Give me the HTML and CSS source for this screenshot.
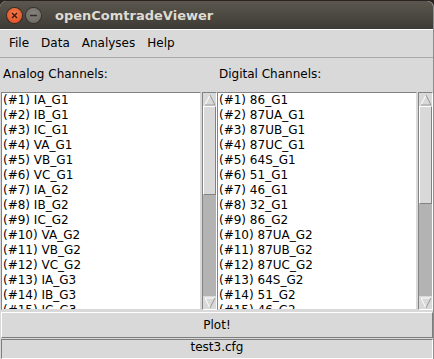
FILE: index.html
```html
<!DOCTYPE html>
<html lang="en">
<head>
  <meta charset="UTF-8">
  <title>openComtradeViewer</title>
  <link rel="stylesheet" href="styles.css">
</head>
<body>
  <div class="window">
    <div class="titlebar">
      <span class="btn close">
        <svg width="15" height="15" viewBox="0 0 15 15"><path d="M5 5 L10 10 M10 5 L5 10" stroke="#3b1a10" stroke-width="1.4"/></svg>
      </span>
      <span class="btn minimize">
        <svg width="15" height="15" viewBox="0 0 15 15"><path d="M4 7.5 H11" stroke="#2e2e2b" stroke-width="1.4"/></svg>
      </span>
      <span class="title">openComtradeViewer</span>
    </div>

    <div class="menubar">
      <span class="menu">File</span>
      <span class="menu">Data</span>
      <span class="menu">Analyses</span>
      <span class="menu">Help</span>
    </div>

    <div class="channels">
      <div class="column">
        <div class="caption">Analog Channels:</div>
        <div class="listframe">
          <ul class="listbox" id="analog"></ul>
          <div class="scrollbar">
            <div class="arrow up"><svg width="12" height="12" viewBox="0 0 12 12"><polygon points="6,1 11,11 1,11" fill="#d9d9d9" stroke="#fff"/><path d="M11 11 H1" stroke="#8a8a8a"/><path d="M6 1 L11 11" stroke="#8a8a8a"/></svg></div>
            <div class="trough"><div class="slider" style="height: 89px"></div></div>
            <div class="arrow down"><svg width="12" height="12" viewBox="0 0 12 12"><polygon points="1,1 11,1 6,11" fill="#d9d9d9" stroke="#fff"/><path d="M11 1 L6 11" stroke="#8a8a8a"/></svg></div>
          </div>
        </div>
      </div>
      <div class="column">
        <div class="caption">Digital Channels:</div>
        <div class="listframe">
          <ul class="listbox" id="digital"></ul>
          <div class="scrollbar">
            <div class="arrow up"><svg width="12" height="12" viewBox="0 0 12 12"><polygon points="6,1 11,11 1,11" fill="#d9d9d9" stroke="#fff"/><path d="M11 11 H1" stroke="#8a8a8a"/><path d="M6 1 L11 11" stroke="#8a8a8a"/></svg></div>
            <div class="trough"><div class="slider" style="height: 98px"></div></div>
            <div class="arrow down"><svg width="12" height="12" viewBox="0 0 12 12"><polygon points="1,1 11,1 6,11" fill="#d9d9d9" stroke="#fff"/><path d="M11 1 L6 11" stroke="#8a8a8a"/></svg></div>
          </div>
        </div>
      </div>
    </div>

    <button class="plot">Plot!</button>
    <div class="status">test3.cfg</div>
  </div>

  <script>
    const analog = ["IA_G1", "IB_G1", "IC_G1", "VA_G1", "VB_G1", "VC_G1",
      "IA_G2", "IB_G2", "IC_G2", "VA_G2", "VB_G2", "VC_G2",
      "IA_G3", "IB_G3", "IC_G3", "VA_G3", "VB_G3", "VC_G3"];
    const digital = ["86_G1", "87UA_G1", "87UB_G1", "87UC_G1", "64S_G1", "51_G1", "46_G1", "32_G1",
      "86_G2", "87UA_G2", "87UB_G2", "87UC_G2", "64S_G2", "51_G2", "46_G2", "32_G2"];

    function fill(id, names) {
      const list = document.getElementById(id);
      names.forEach((name, i) => {
        const item = document.createElement("li");
        item.textContent = "(#" + (i + 1) + ") " + name;
        list.appendChild(item);
      });
    }

    fill("analog", analog);
    fill("digital", digital);
  </script>
</body>
</html>
```

FILE: styles.css
```css
body {
  margin: 0;
  background: #2a2320;
  font-family: 'DejaVu Sans', sans-serif;
  font-size: 12px;
  color: #000;
}
.window {
  width: 433px;
  height: 358px;
  margin-top: 1px;
  background: #d9d9d9;
  border-radius: 6px 6px 0 0;
  overflow: hidden;
  display: flex;
  flex-direction: column;
  box-shadow: 1px 0 0 #8d8d8d;
}
.titlebar {
  height: 28px;
  display: flex;
  align-items: center;
  background: linear-gradient(#5b574e, #3d3b36);
  flex-shrink: 0;
}
.btn {
  width: 15px;
  height: 15px;
  border-radius: 50%;
  display: flex;
  margin-left: 4px;
}
.btn.close {
  margin-left: 7px;
  background: radial-gradient(circle at 50% 35%, #f47a4a, #df4a1c);
  box-shadow: 0 0 0 1px #3a2a22;
}
.btn.minimize {
  background: radial-gradient(circle at 50% 35%, #85827b, #6a6862);
  box-shadow: 0 0 0 1px #35332f;
}
.title {
  margin-left: 14px;
  color: #dfdbd2;
  font-weight: bold;
  font-size: 13px;
}
.menubar {
  height: 27px;
  display: flex;
  align-items: center;
  padding-left: 3px;
  border-top: 1px solid #fff;
  border-bottom: 1px solid #a8a8a8;
  flex-shrink: 0;
}
.menu {
  padding: 0 6px;
  line-height: 15px;
}
.channels {
  display: grid;
  grid-template-columns: 216px 216px;
  padding-left: 1px;
}
.caption {
  padding: 9px 0 10px 2px;
  line-height: 15px;
}
.listframe {
  display: flex;
  height: 218px;
}
.listbox {
  flex: 1;
  margin: 0;
  padding: 0 0 0 1px;
  list-style: none;
  background: #fff;
  border: 1px solid;
  border-color: #838383 #d9d9d9 #d9d9d9 #838383;
  overflow: hidden;
  line-height: 15px;
}
.listbox li {
  white-space: nowrap;
  height: 15px;
}
.scrollbar {
  width: 13px;
  margin-left: 1px;
  display: flex;
  flex-direction: column;
  background: #b3b3b3;
  border: 1px solid;
  border-color: #838383 #fff #fff #838383;
}
.arrow {
  height: 13px;
  display: flex;
  align-items: center;
  justify-content: center;
  background: #d9d9d9;
}
.trough {
  flex: 1;
}
.slider {
  background: #d9d9d9;
  border: 1px solid;
  border-color: #fff #838383 #838383 #fff;
  box-sizing: border-box;
}
.plot {
  margin: 2px 0 0 1px;
  width: 432px;
  height: 26px;
  background: #d9d9d9;
  border: 1px solid;
  border-color: #fff #7d7d7d #7d7d7d #fff;
  font-family: 'DejaVu Sans', sans-serif;
  font-size: 12px;
  color: #000;
  padding: 0;
}
.status {
  margin: 1px 0 0 1px;
  flex: 1;
  border: 1px solid;
  border-color: #7d7d7d #fff #fff #7d7d7d;
  text-align: center;
  line-height: 15px;
}
```
